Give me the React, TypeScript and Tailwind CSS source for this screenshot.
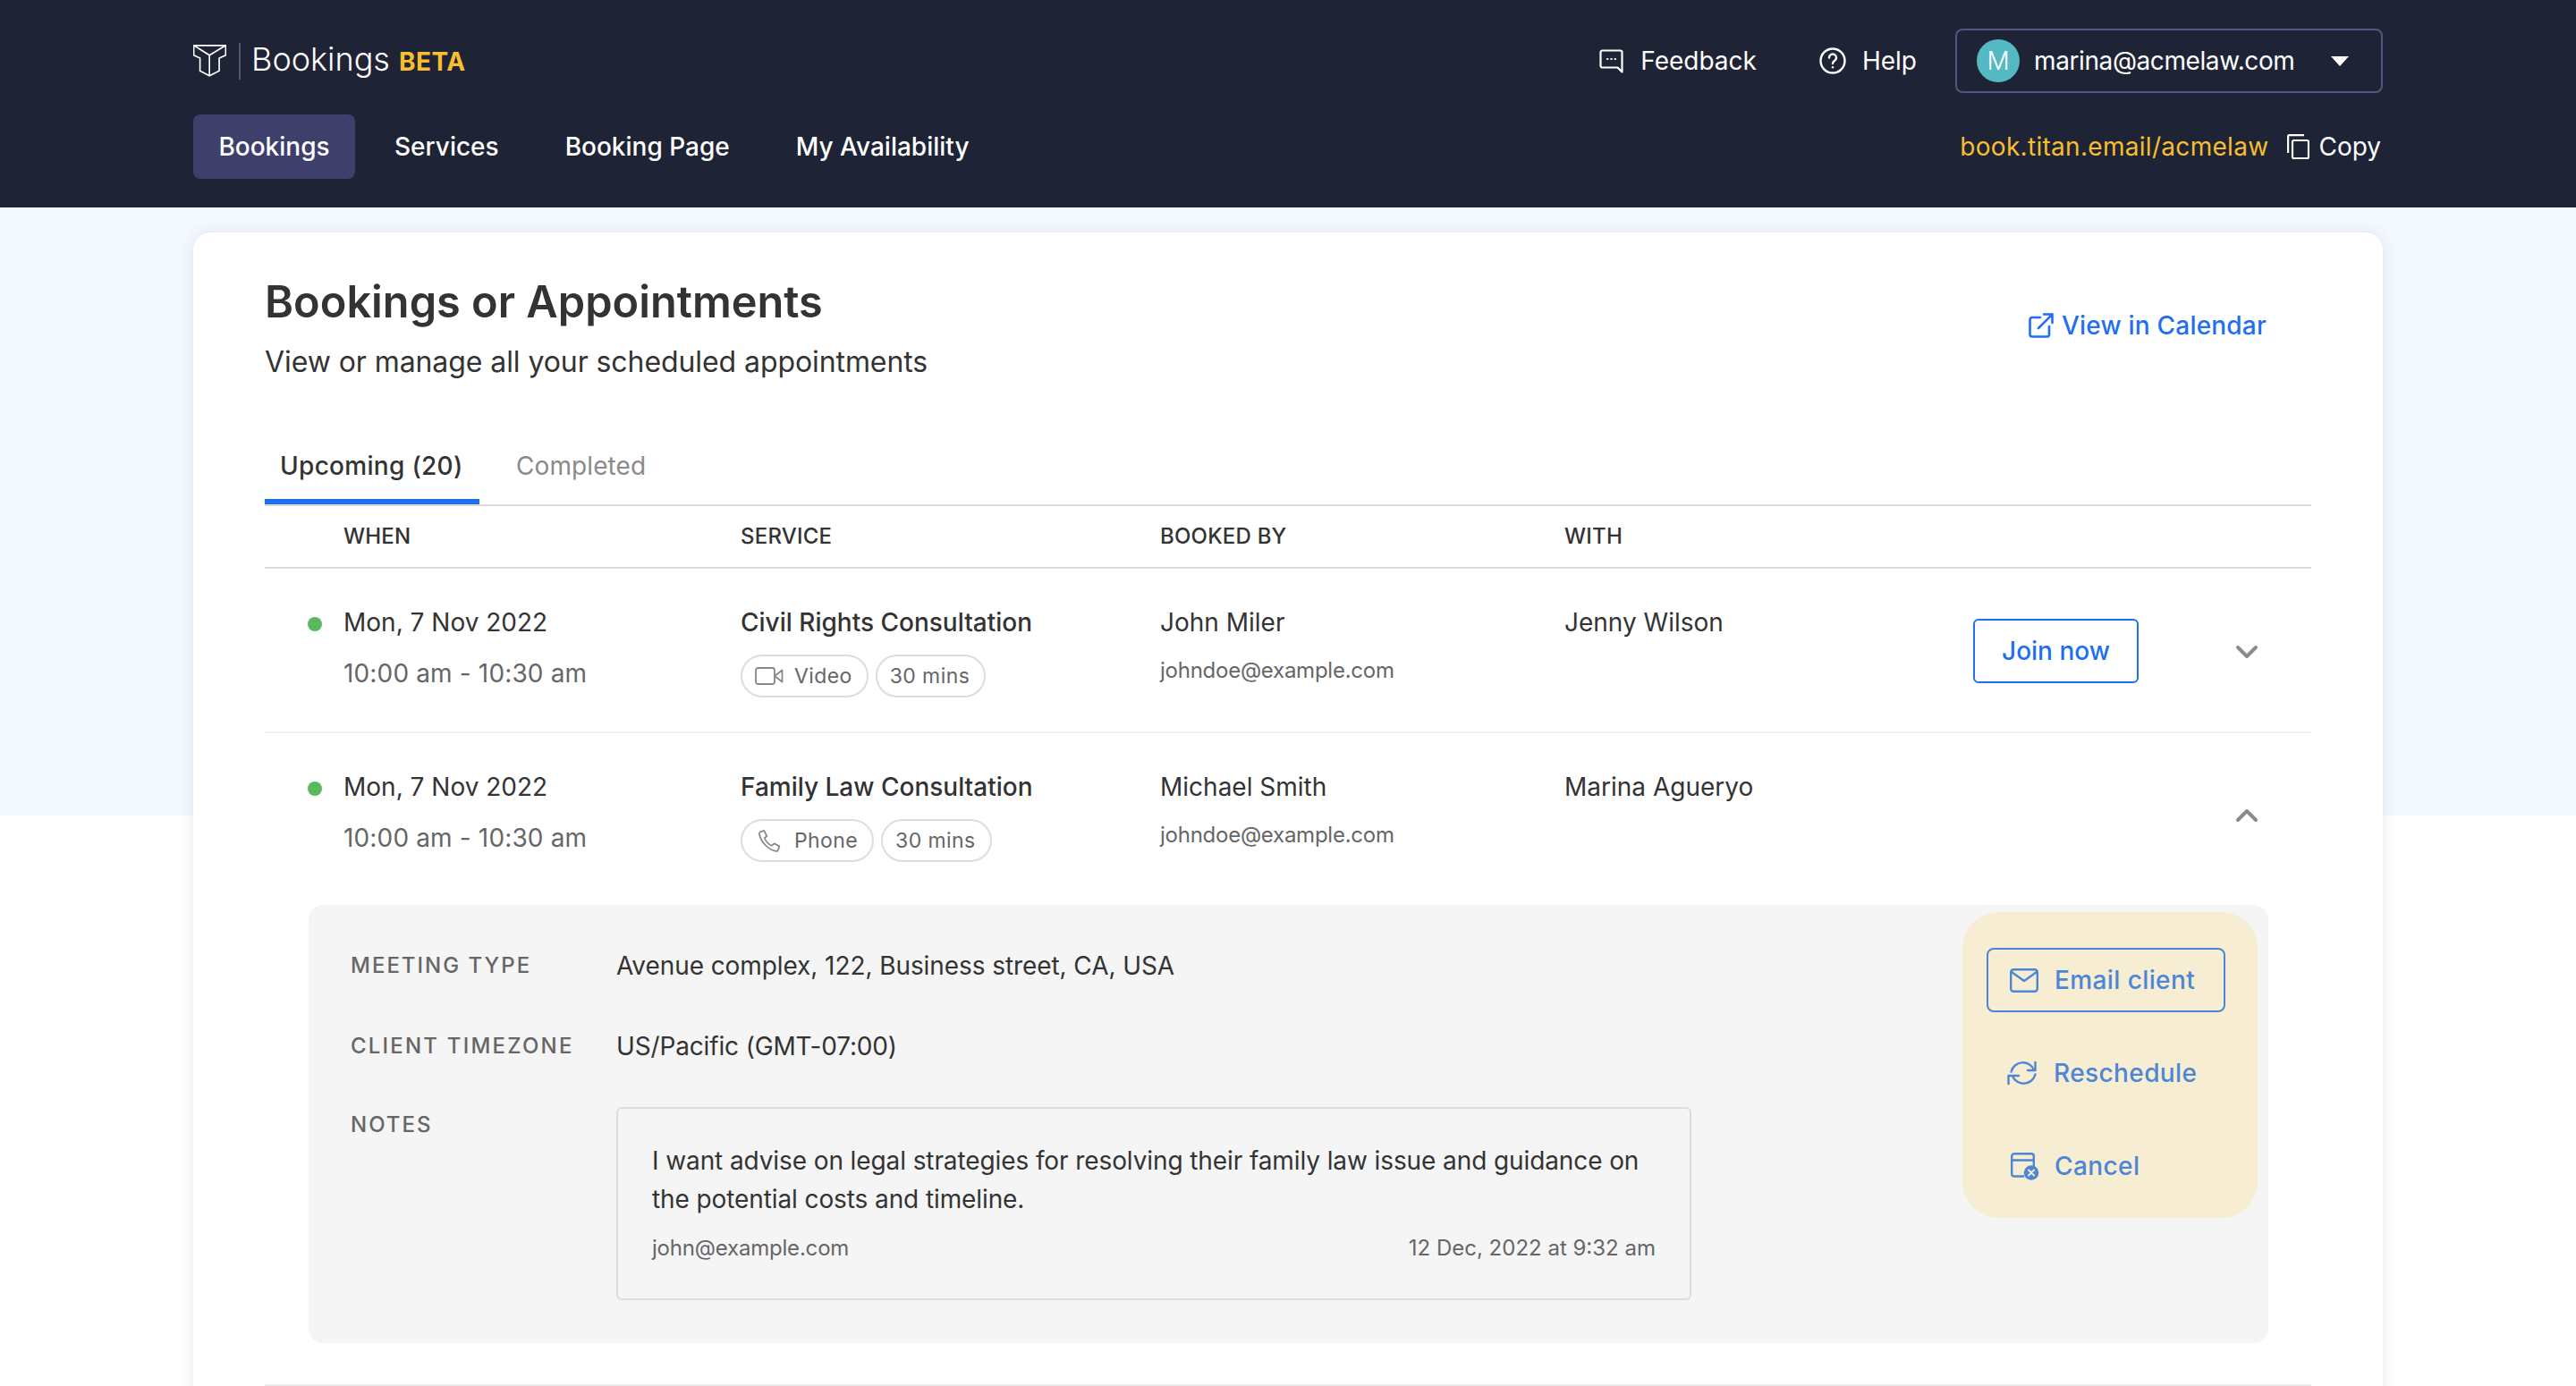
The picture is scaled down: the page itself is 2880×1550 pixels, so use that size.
import type { ReactNode } from 'react'
import { ChevronDown, ChevronUp } from 'lucide-react'

function LogoMark() {
  return (
    <svg viewBox="-2 -2 112 108" className="h-[36px] w-[37px] shrink-0" fill="none" stroke="#fff" strokeWidth="5" strokeLinejoin="round">
      <path d="M0 0H108V33L86 43V86L53 103L21 86V43L0 33Z" />
      <path d="M0 0L53 33L108 0M53 33V103" />
    </svg>
  )
}

function FeedbackIcon() {
  return (
    <svg viewBox="0 0 27 27" className="h-[27px] w-[27px]" fill="none" stroke="#fff" strokeWidth="2.2" strokeLinejoin="round" strokeLinecap="round">
      <path d="M3.500 1.500H23.500a2 2 0 0 1 2 2V25.500L20.500 20.500H3.500a2 2 0 0 1-2-2V3.500a2 2 0 0 1 2-2Z" />
      <path d="M9 11h.4M13.300 11h.4M17.600 11h.4" />
    </svg>
  )
}

function HelpIcon() {
  return (
    <svg viewBox="0 0 30 30" className="h-[30px] w-[30px]" fill="none" stroke="#fff" strokeWidth="2.4" strokeLinecap="round">
      <circle cx="15" cy="15" r="13.500" />
      <path d="M11 11.500a4 4 0 1 1 6 3.500c-1.400.8-2 1.600-2 3" />
      <path d="M15 22.200v.1" />
    </svg>
  )
}

function CopyIcon() {
  return (
    <svg viewBox="0 0 25 28" className="h-[28px] w-[25px]" fill="none" stroke="#fff" strokeWidth="2.200">
      <rect x="6" y="7" width="18" height="20" rx="1.500" />
      <path d="M1.100 21V2.500a1.400 1.400 0 0 1 1.400-1.400H19" />
    </svg>
  )
}

function ExternalIcon() {
  return (
    <svg viewBox="0 0 28 28" className="h-[28px] w-[28px]" fill="none" stroke="#1f6fef" strokeWidth="2.600" strokeLinecap="round" strokeLinejoin="round">
      <path d="M13 5H4a2.500 2.500 0 0 0-2.500 2.500V24A2.500 2.500 0 0 0 4 26.500h16.500A2.500 2.500 0 0 0 23 24V15" />
      <path d="M17 1.500H26.500V11M26.500 1.500L11 17" />
    </svg>
  )
}

function VideoIcon() {
  return (
    <svg viewBox="0 0 32 20" className="h-[20px] w-[32px]" fill="none" stroke="#888" strokeWidth="1.800" strokeLinejoin="round">
      <rect x="1" y="1" width="21" height="18" rx="2.500" />
      <path d="M22 10L30.500 3.500V16.500Z" />
    </svg>
  )
}

function PhoneIcon() {
  return (
    <svg viewBox="0 0 28 28" className="h-[27px] w-[27px]" fill="none" stroke="#888" strokeWidth="1.800" strokeLinejoin="round">
      <path d="M3 3.500 7.500 2l3.200 6.300-2.600 2.300c1.500 3.800 4.600 7.200 8.500 8.800l2.700-2.500 6 3.200-1.600 4.400c-.4 1-1.400 1.500-2.400 1.300C12.500 24.300 4 15.600 2 6c-.2-1 .2-2 1-2.500Z" />
    </svg>
  )
}

function MailIcon() {
  return (
    <svg viewBox="0 0 32 27" className="h-[27px] w-[32px]" fill="none" stroke="#4c86d6" strokeWidth="2.400" strokeLinejoin="round" strokeLinecap="round">
      <rect x="1.200" y="1.200" width="29.600" height="24.600" rx="3" />
      <path d="M2 4L16 14L30 4" />
    </svg>
  )
}

function RefreshIcon() {
  return (
    <svg viewBox="0 0 36 30" className="h-[30px] w-[36px]" fill="none" stroke="#4c86d6" strokeWidth="2.400" strokeLinejoin="round" strokeLinecap="round">
      <path d="M4.500 13.500A13.500 13.500 0 0 1 30 11.500" />
      <path d="M31.500 3V12H23" />
      <path d="M31.500 16.500A13.500 13.500 0 0 1 6 18.500" />
      <path d="M1.500 27V18H13" />
    </svg>
  )
}

function CancelIcon() {
  return (
    <svg viewBox="0 0 32 31" className="h-[31px] w-[32px]" fill="none" stroke="#4c86d6" strokeWidth="2.400" strokeLinejoin="round" strokeLinecap="round">
      <path d="M14 26.500H4a2.800 2.800 0 0 1-2.800-2.800V4A2.800 2.800 0 0 1 4 1.200H23A2.800 2.800 0 0 1 25.800 4V15" />
      <path d="M1.500 8.500H25.500" />
      <circle cx="23" cy="22.500" r="8.300" fill="#4c86d6" stroke="none" />
      <path d="M20 19.500L26 25.500M26 19.500L20 25.500" stroke="#f7edd2" strokeWidth="2" />
    </svg>
  )
}

const NAV = ['Services', 'Booking Page', 'My Availability']

function Header() {
  return (
    <header className="bg-[#1f2336] h-[232px] px-[216px] pt-8 text-white">
      <div className="flex items-center h-[72px]">
        <LogoMark />
        <div className="w-[2px] h-[41px] bg-[#55586a] ml-[14px] mr-[12px]" />
        <span className="text-[36px] font-light mb-[4px]">Bookings</span>
        <span className="text-[28px] font-bold tracking-[0.5px] text-[#f7bf2f] ml-[10px] mt-[1px]">BETA</span>
        <div className="ml-auto flex items-center">
          <FeedbackIcon />
          <span className="ml-[19px] text-[28px] mb-[1px]">Feedback</span>
          <span className="ml-[70px]"><HelpIcon /></span>
          <span className="ml-[18px] text-[28px] mb-[1px]">Help</span>
          <div className="ml-[43px] w-[478px] h-[72px] border-2 border-[#55557f] rounded-lg flex items-center pl-[22px]">
            <div className="w-[48px] h-[48px] rounded-full bg-[#55b9c4] flex items-center justify-center text-[28px] font-light">M</div>
            <span className="ml-4 text-[28px] tracking-[-0.4px]">marina@acmelaw.com</span>
            <div className="ml-[41px] w-0 h-0 border-x-[10px] border-x-transparent border-t-[11px] border-t-white" />
          </div>
        </div>
      </div>
      <div className="flex items-center h-[72px] mt-6 text-[28px]">
        <div className="bg-[#3e3f6b] rounded-lg h-[72px] w-[181px] flex items-center justify-center font-medium">Bookings</div>
        <div className="flex ml-[44px] gap-[74px] font-medium">
          {NAV.map(n => <span key={n}>{n}</span>)}
        </div>
        <div className="ml-auto mr-[2px] flex items-center">
          <span className="text-[#f7bf2f] tracking-[0.3px]">book.titan.email/acmelaw</span>
          <span className="ml-[21px]"><CopyIcon /></span>
          <span className="ml-[10px]">Copy</span>
        </div>
      </div>
    </header>
  )
}

const COLS = 'grid grid-cols-[88px_444px_469px_452px_1fr]'

type RowProps = { icon: ReactNode; kind: string; service: string; by: string; withName: string }

function Pill({ children }: { children: ReactNode }) {
  return <span className="inline-flex items-center h-[48px] border-2 border-[#ddd] rounded-full pl-[14px] pr-[16px] text-[23px] tracking-[0.4px] text-[#666] gap-[12px]">{children}</span>
}

function Row({ icon, kind, service, by, withName }: RowProps) {
  return (
    <div className={`${COLS} pt-[42px] text-[#333]`}>
      <div className="pl-[48px] pt-[12px]"><div className="w-4 h-4 rounded-full bg-[#5cb85c]" /></div>
      <div>
        <div className="text-[28px] leading-[36px]">Mon, 7 Nov 2022</div>
        <div className="text-[28px] leading-[36px] tracking-[0.15px] mt-[21px] text-[#666]">10:00 am - 10:30 am</div>
      </div>
      <div>
        <div className="text-[28px] leading-[36px] font-medium">{service}</div>
        <div className="flex gap-[8px] mt-[18px]">
          <Pill><span className="w-[32px] flex justify-center">{icon}</span>{kind}</Pill>
          <Pill>30 mins</Pill>
        </div>
      </div>
      <div>
        <div className="text-[28px] leading-[36px]">{by}</div>
        <div className="text-[24px] leading-[32px] tracking-[-0.25px] mt-[20px] text-[#666]">johndoe@example.com</div>
      </div>
      <div className="text-[28px] leading-[36px]">{withName}</div>
    </div>
  )
}

function Details() {
  return (
    <div className="ml-[49px] mr-[48px] mt-[48px] bg-[#f5f5f5] rounded-[16px] h-[490px] pl-[47px] pr-[12px] pt-[8px] flex justify-between">
      <div className="w-[1500px] pt-[44px]">
        <div className="grid grid-cols-[297px_1fr]">
          <div className="text-[24px] leading-[32px] font-medium tracking-[2px] text-[#666]">MEETING TYPE</div>
          <div className="text-[28px] leading-[32px] tracking-[-0.08px] text-[#333]">Avenue complex, 122, Business street, CA, USA</div>
        </div>
        <div className="grid grid-cols-[297px_1fr] mt-[58px]">
          <div className="text-[24px] leading-[32px] font-medium tracking-[2.2px] text-[#666]">CLIENT TIMEZONE</div>
          <div className="text-[28px] leading-[32px] tracking-[-0.15px] text-[#333]">US/Pacific (GMT-07:00)</div>
        </div>
        <div className="grid grid-cols-[297px_1202px] mt-[52px]">
          <div className="text-[24px] leading-[32px] font-medium tracking-[2px] text-[#666] pt-[4px]">NOTES</div>
          <div className="border-2 border-[#ddd] rounded-md h-[216px] px-[38px] pt-[37px]">
            <div className="text-[28px] leading-[43px] tracking-[-0.1px] text-[#333]">I want advise on legal strategies for resolving their family law issue and guidance on the potential costs and timeline.</div>
            <div className="flex justify-between text-[24px] leading-[32px] text-[#666] mt-[17px]">
              <span className="tracking-[-0.2px]">john@example.com</span>
              <span>12 Dec, 2022 at 9:32 am</span>
            </div>
          </div>
        </div>
      </div>
      <div className="w-[330px] h-[342px] bg-[#f7edd2] rounded-[40px] pl-[27px] pt-[40px] text-[#4c86d6] text-[28px] font-medium tracking-[0.4px]">
        <div className="w-[267px] h-[72px] border-2 border-[#4c86d6] rounded-lg flex items-center pl-[24px] gap-[18px]">
          <MailIcon />
          <span>Email client</span>
        </div>
        <div className="flex items-center h-[32px] pl-[23px] gap-[16px] mt-[52px]">
          <RefreshIcon />
          <span>Reschedule</span>
        </div>
        <div className="flex items-center h-[32px] pl-[27px] gap-[17px] mt-[72px]">
          <CancelIcon />
          <span>Cancel</span>
        </div>
      </div>
    </div>
  )
}

export default function App() {
  return (
    <div className='font-["Inter",sans-serif] h-[1550px] overflow-hidden bg-white'>
      <Header />
      <main className="bg-[linear-gradient(#f4f8ff_680px,#fff_680px)] px-[216px] pt-[28px] h-[1318px]">
        <div className="bg-white rounded-t-[20px] shadow-[0_0_16px_rgba(60,80,130,0.12)] h-[1400px] px-[80px] pt-[46px]">
          <div className="flex items-start justify-between">
            <div>
              <h1 className="text-[48.7px] leading-[64px] font-semibold text-[#333]">Bookings or Appointments</h1>
              <p className="text-[32px] leading-[40px] tracking-[-0.08px] mt-[15px] text-[#333]">View or manage all your scheduled appointments</p>
            </div>
            <div className="flex items-center gap-[9px] text-[28px] font-medium tracking-[0.2px] text-[#1f6fef] mr-[50px] mt-[37px]">
              <ExternalIcon />
              <span>View in Calendar</span>
            </div>
          </div>
          <div className="flex mt-[73px] border-b-2 border-[#ddd] h-[68px]">
            <div className="w-[240px] h-full border-b-[6px] border-[#1f6fef] pl-[17px] pt-[5px] text-[28px] leading-[36px] font-medium tracking-[0.3px] text-[#333]">Upcoming (20)</div>
            <div className="pl-[41px] pt-[5px] text-[28px] leading-[36px] tracking-[0.1px] text-[#8a8a8a]">Completed</div>
          </div>
          <div className={`${COLS} h-[70px] items-center border-b-2 border-[#ddd] text-[24px] font-medium tracking-[0.2px] text-[#333]`}>
            <span />
            <span>WHEN</span>
            <span>SERVICE</span>
            <span>BOOKED BY</span>
            <span>WITH</span>
          </div>
          <div className="relative h-[184px] border-b-2 border-[#f0f0f0]">
            <Row icon={<VideoIcon />} kind="Video" service="Civil Rights Consultation" by="John Miler" withName="Jenny Wilson" />
            <div className="absolute left-[1910px] top-[56px] w-[185px] h-[72px] border-2 border-[#1f6fef] rounded-md flex items-center justify-center text-[28px] font-medium text-[#1f6fef]">Join now</div>
            <ChevronDown className="absolute left-[2196px] top-[73px] w-[40px] h-[40px] text-[#8a8a8a]" strokeWidth={2.4} />
          </div>
          <div className="relative">
            <Row icon={<PhoneIcon />} kind="Phone" service="Family Law Consultation" by="Michael Smith" withName="Marina Agueryo" />
            <ChevronUp className="absolute left-[2196px] top-[72px] w-[40px] h-[40px] text-[#8a8a8a]" strokeWidth={2.4} />
            <Details />
          </div>
          <div className="mt-[46px] border-b-2 border-[#eee]" />
        </div>
      </main>
    </div>
  )
}
